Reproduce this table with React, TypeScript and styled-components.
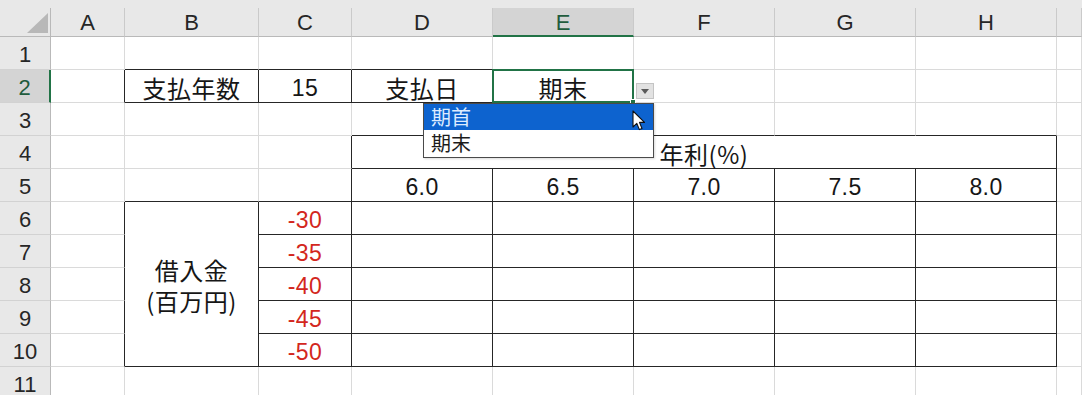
import React from "react";
import styled, { createGlobalStyle } from "styled-components";

const GlobalStyle = createGlobalStyle`
  html, body { margin: 0; padding: 0; background: #ffffff; }
  body { font-family: "Liberation Sans", "Noto Sans CJK JP", sans-serif; }
  * { box-sizing: border-box; }
`;

const COLS = ["A", "B", "C", "D", "E", "F", "G", "H", "I"];
const ROWS = 11;

type Tone = "num" | "red" | "jp";
type CellDef = {
  text?: string;
  tone?: Tone;
  cs?: number;
  rs?: number;
  boxed?: boolean;
  dropdown?: boolean;
};

// key: "C{col}R{row}" with col 1-based on COLS index (A=1)
const defs: Record<string, CellDef> = {
  B2: { text: "支払年数", tone: "jp", boxed: true },
  C2: { text: "15", tone: "num", boxed: true },
  D2: { text: "支払日", tone: "jp", boxed: true },
  E2: { text: "期末", tone: "jp", boxed: true, dropdown: true },
  D4: { text: "年利(%)", tone: "jp", boxed: true, cs: 5 },
  D5: { text: "6.0", tone: "num", boxed: true },
  E5: { text: "6.5", tone: "num", boxed: true },
  F5: { text: "7.0", tone: "num", boxed: true },
  G5: { text: "7.5", tone: "num", boxed: true },
  H5: { text: "8.0", tone: "num", boxed: true },
  B6: { text: "借入金\n(百万円)", tone: "jp", boxed: true, rs: 5 },
};
["-30", "-35", "-40", "-45", "-50"].forEach((v, i) => {
  defs[`C${6 + i}`] = { text: v, tone: "red", boxed: true };
  ["D", "E", "F", "G", "H"].forEach((c) => {
    defs[`${c}${6 + i}`] = { boxed: true };
  });
});

// owner map for merged cells
const owner: Record<string, string> = {};
Object.entries(defs).forEach(([key, d]) => {
  const ci = COLS.indexOf(key[0]);
  const r = parseInt(key.slice(1), 10);
  for (let dc = 0; dc < (d.cs ?? 1); dc++) {
    for (let dr = 0; dr < (d.rs ?? 1); dr++) {
      owner[`${COLS[ci + dc]}${r + dr}`] = key;
    }
  }
});
const ownerOf = (ci: number, r: number) => {
  const k = `${COLS[ci]}${r}`;
  return owner[k] ?? k;
};
const isBoxed = (ci: number, r: number) => {
  if (ci < 0 || ci >= COLS.length || r < 1) return false;
  return !!defs[ownerOf(ci, r)]?.boxed;
};

const Sheet = styled.div`
  width: 1082px;
  height: 395px;
  overflow: hidden;
  background: #ffffff;
  display: flex;
  flex-direction: column;
`;

const TopStrip = styled.div`
  flex: none;
  height: 8px;
  background: #e8e8e8;
`;

const Grid = styled.div`
  display: grid;
  grid-template-columns: 51px 74px 134px 93px repeat(5, 141px) 1fr;
  grid-template-rows: 29px repeat(${ROWS}, 33px);
`;

const Corner = styled.div`
  background: #e8e8e8;
  border-right: 1px solid #b9b9b9;
  border-bottom: 1px solid #b9b9b9;
  display: flex;
  align-items: flex-end;
  justify-content: flex-end;
  padding: 0 2px 3px 0;
`;

const ColHeader = styled.div<{ $active?: boolean }>`
  background: ${(p) => (p.$active ? "#d4d4d4" : "#e8e8e8")};
  border-right: 1px solid #cacaca;
  border-bottom: ${(p) => (p.$active ? "2px solid #217346" : "1px solid #b9b9b9")};
  color: ${(p) => (p.$active ? "#1f5c3d" : "#262626")};
  font-family: "Liberation Sans", sans-serif;
  font-size: 22px;
  display: flex;
  align-items: center;
  justify-content: center;
  padding-top: ${(p) => (p.$active ? "3px" : "2px")};
`;

const RowHeader = styled.div<{ $active?: boolean }>`
  background: ${(p) => (p.$active ? "#d4d4d4" : "#e8e8e8")};
  border-right: ${(p) => (p.$active ? "2px solid #217346" : "1px solid #b9b9b9")};
  border-bottom: 1px solid #d2d2d2;
  color: ${(p) => (p.$active ? "#1f5c3d" : "#262626")};
  font-family: "Liberation Sans", sans-serif;
  font-size: 22px;
  display: flex;
  align-items: center;
  justify-content: center;
  padding-top: 3px;
`;

const Cell = styled.div<{ $r: boolean; $b: boolean; $col: number; $row: number; $cs: number; $rs: number; $rel?: boolean }>`
  grid-column: ${(p) => p.$col} / span ${(p) => p.$cs};
  grid-row: ${(p) => p.$row} / span ${(p) => p.$rs};
  border-right: 1px solid ${(p) => (p.$r ? "#262626" : "#dadada")};
  border-bottom: 1px solid ${(p) => (p.$b ? "#262626" : "#dadada")};
  display: flex;
  align-items: center;
  justify-content: center;
  position: ${(p) => (p.$rel ? "relative" : "static")};
  min-width: 0;
`;

const Value = styled.span<{ $tone: Tone }>`
  white-space: pre;
  text-align: center;
  color: ${(p) => (p.$tone === "red" ? "#d3271d" : "#161616")};
  font-family: ${(p) =>
    p.$tone === "jp"
      ? `"Noto Sans CJK JP", sans-serif`
      : `"Liberation Sans", sans-serif`};
  font-size: ${(p) => (p.$tone === "jp" ? "24px" : "23px")};
  line-height: ${(p) => (p.$tone === "jp" ? "31px" : "normal")};
  padding-top: ${(p) => (p.$tone === "jp" ? "2px" : "4px")};
  letter-spacing: ${(p) => (p.$tone === "jp" ? "0.5px" : "0.4px")};
`;

const Selection = styled.div`
  position: absolute;
  top: -1px;
  left: -1px;
  right: -1px;
  bottom: -1px;
  border: 2px solid #217346;
  pointer-events: none;
  z-index: 4;
`;

const FillHandle = styled.div`
  position: absolute;
  right: -4px;
  bottom: -4px;
  width: 6px;
  height: 6px;
  background: #217346;
  border: 1px solid #ffffff;
`;

const ArrowButton = styled.div`
  position: absolute;
  left: 143px;
  top: 13px;
  width: 18px;
  height: 16px;
  background: #e2e2e2;
  border: 1px solid #c4c4c4;
  display: flex;
  align-items: center;
  justify-content: center;
  z-index: 6;
`;

const DropList = styled.div`
  position: absolute;
  left: -70px;
  top: 33px;
  width: 231px;
  height: 55px;
  background: #ffffff;
  border: 1px solid #4a4a4a;
  z-index: 8;
  display: flex;
  flex-direction: column;
  box-shadow: 1px 1px 2px rgba(0, 0, 0, 0.15);
`;

const DropItem = styled.div<{ $hl?: boolean }>`
  height: 26px;
  flex: none;
  background: ${(p) => (p.$hl ? "#0d63cf" : "#ffffff")};
  color: ${(p) => (p.$hl ? "#dcebff" : "#1c1c1c")};
  font-family: "Noto Sans CJK JP", sans-serif;
  font-size: 20px;
  line-height: 26px;
  padding-left: 7px;
`;

const Cursor = styled.svg`
  position: absolute;
  left: 139px;
  top: 40px;
  z-index: 10;
`;

const CornerTriangle = () => (
  <svg width="21" height="20" viewBox="0 0 21 20">
    <polygon points="21,0 21,20 0,20" fill="#b8b8b8" />
  </svg>
);

const Dropdown = () => (
  <>
    <Selection>
      <FillHandle />
    </Selection>
    <ArrowButton>
      <svg width="8" height="5" viewBox="0 0 8 5">
        <polygon points="0,0 8,0 4,5" fill="#5a5a5a" />
      </svg>
    </ArrowButton>
    <DropList>
      <DropItem $hl>期首</DropItem>
      <DropItem>期末</DropItem>
    </DropList>
    <Cursor width="14" height="22" viewBox="0 0 14 22">
      <path
        d="M1 1 L1 17 L4.8 13.4 L7.4 19.6 L10 18.5 L7.5 12.4 L12.5 12.4 Z"
        fill="#ffffff"
        stroke="#111111"
        strokeWidth="1.1"
        strokeLinejoin="round"
      />
    </Cursor>
  </>
);

export default function App() {
  const cells: React.ReactNode[] = [];
  for (let r = 1; r <= ROWS; r++) {
    for (let ci = 0; ci < COLS.length; ci++) {
      const key = `${COLS[ci]}${r}`;
      const own = ownerOf(ci, r);
      if (own !== key) continue; // covered by a merged cell
      const d = defs[key] ?? {};
      const cs = d.cs ?? 1;
      const rs = d.rs ?? 1;
      const right = !!d.boxed || isBoxed(ci + cs, r);
      const bottom = !!d.boxed || isBoxed(ci, r + rs);
      cells.push(
        <Cell
          key={key}
          $col={ci + 2}
          $row={r + 1}
          $cs={cs}
          $rs={rs}
          $r={right}
          $b={bottom}
          $rel={!!d.dropdown}
        >
          {d.text && <Value $tone={d.tone ?? "num"}>{d.text}</Value>}
          {d.dropdown && <Dropdown />}
        </Cell>
      );
    }
  }

  return (
    <>
      <GlobalStyle />
      <Sheet>
        <TopStrip />
        <Grid>
          <Corner>
            <CornerTriangle />
          </Corner>
          {COLS.map((c) => (
            <ColHeader key={c} $active={c === "E"}>
              {c === "I" ? "" : c}
            </ColHeader>
          ))}
          {Array.from({ length: ROWS }, (_, i) => (
            <RowHeader key={i} $active={i + 1 === 2} style={{ gridColumn: 1, gridRow: i + 2 }}>
              {i + 1}
            </RowHeader>
          ))}
          {cells}
        </Grid>
      </Sheet>
    </>
  );
}
